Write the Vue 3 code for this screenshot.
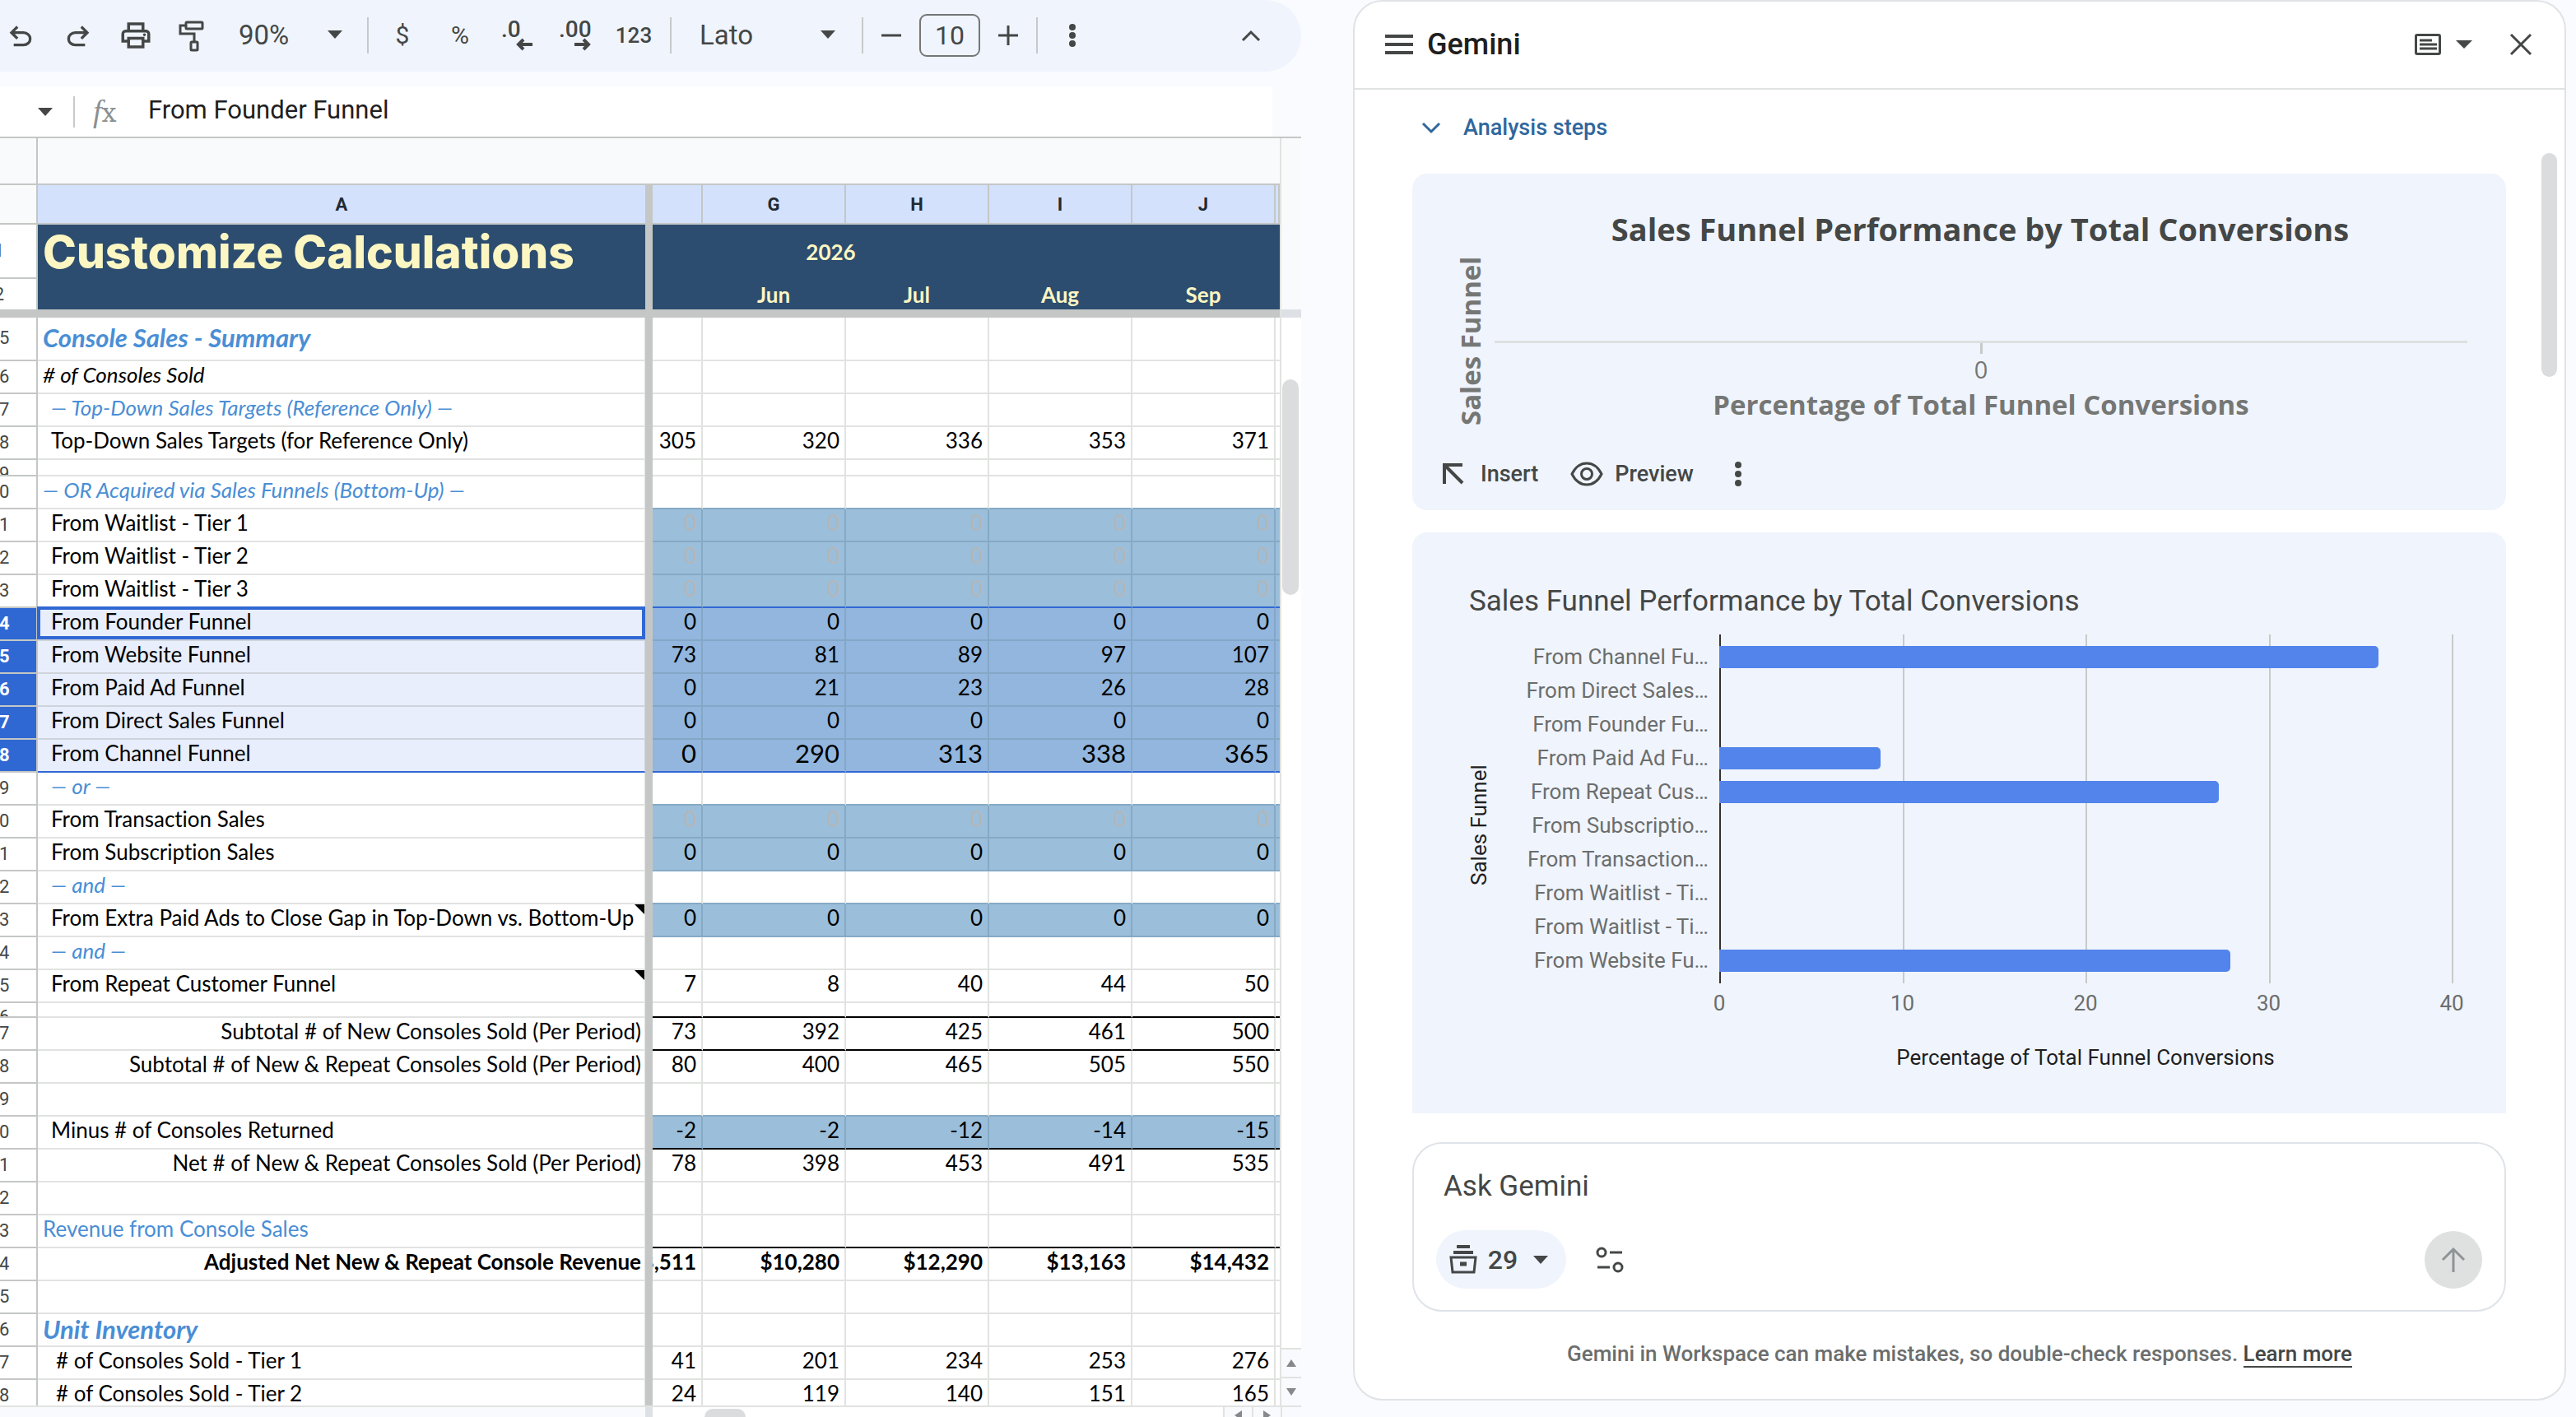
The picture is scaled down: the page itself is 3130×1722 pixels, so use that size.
<script setup>
import { ref } from 'vue'

const zoom = ref('90%')
const font = ref('Lato')
const fontSize = ref('10')
const formula = ref('From Founder Funnel')
const prompt = ref('')

const months = ['G', 'H', 'I', 'J']
const z = ['0', '0', '0', '0', '0']

const rows = [
  { n: 15, label: 'Console Sales - Summary', kind: 'section', size: 'tall' },
  { n: 16, label: '# of Consoles Sold', kind: 'italic' },
  { n: 17, label: '— Top-Down Sales Targets (Reference Only) —', kind: 'group indent' },
  { n: 18, label: 'Top-Down Sales Targets (for Reference Only)', kind: 'indent', v: ['305', '320', '336', '353', '371'] },
  { n: 19, size: 'thin' },
  { n: 20, label: '— OR Acquired via Sales Funnels (Bottom-Up) —', kind: 'group', edge: 'shade' },
  { n: 21, label: 'From Waitlist - Tier 1', kind: 'indent', v: z, fill: 'muted' },
  { n: 22, label: 'From Waitlist - Tier 2', kind: 'indent', v: z, fill: 'muted' },
  { n: 23, label: 'From Waitlist - Tier 3', kind: 'indent', v: z, fill: 'muted', edge: 'range' },
  { n: 24, label: 'From Founder Funnel', kind: 'indent active', v: z, fill: 'input', sel: true },
  { n: 25, label: 'From Website Funnel', kind: 'indent', v: ['73', '81', '89', '97', '107'], fill: 'input', sel: true },
  { n: 26, label: 'From Paid Ad Funnel', kind: 'indent', v: ['0', '21', '23', '26', '28'], fill: 'input', sel: true },
  { n: 27, label: 'From Direct Sales Funnel', kind: 'indent', v: z, fill: 'input', sel: true },
  { n: 28, label: 'From Channel Funnel', kind: 'indent', v: ['0', '290', '313', '338', '365'], fill: 'input', sel: true, edge: 'range', big: true },
  { n: 29, label: '— or —', kind: 'group indent', edge: 'shade' },
  { n: 30, label: 'From Transaction Sales', kind: 'indent', v: z, fill: 'muted' },
  { n: 31, label: 'From Subscription Sales', kind: 'indent', v: z, fill: 'input' },
  { n: 32, label: '— and —', kind: 'group indent', edge: 'shade' },
  { n: 33, label: 'From Extra Paid Ads to Close Gap in Top-Down vs. Bottom-Up', kind: 'indent', v: z, fill: 'input', note: true },
  { n: 34, label: '— and —', kind: 'group indent' },
  { n: 35, label: 'From Repeat Customer Funnel', kind: 'indent', v: ['7', '8', '40', '44', '50'], note: true },
  { n: 36, size: 'short', edge: 'total' },
  { n: 37, label: 'Subtotal # of New Consoles Sold (Per Period)', kind: 'right', v: ['73', '392', '425', '461', '500'], edge: 'total' },
  { n: 38, label: 'Subtotal # of New & Repeat Consoles Sold (Per Period)', kind: 'right', v: ['80', '400', '465', '505', '550'] },
  { n: 39, edge: 'shade' },
  { n: 40, label: 'Minus # of Consoles Returned', kind: 'indent', v: ['-2', '-2', '-12', '-14', '-15'], fill: 'input', edge: 'total' },
  { n: 41, label: 'Net # of New & Repeat Consoles Sold (Per Period)', kind: 'right', v: ['78', '398', '453', '491', '535'] },
  { n: 42 },
  { n: 43, label: 'Revenue from Console Sales', kind: 'blue', edge: 'total' },
  { n: 44, label: 'Adjusted Net New & Repeat Console Revenue', kind: 'right strong', v: ['$8,511', '$10,280', '$12,290', '$13,163', '$14,432'], strong: true },
  { n: 45 },
  { n: 46, label: 'Unit Inventory', kind: 'section' },
  { n: 47, label: '# of Consoles Sold - Tier 1', kind: 'indent2', v: ['41', '201', '234', '253', '276'] },
  { n: 48, label: '# of Consoles Sold - Tier 2', kind: 'indent2', v: ['24', '119', '140', '151', '165'] },
]

const bars = [
  { label: 'From Channel Fu…', value: 36 },
  { label: 'From Direct Sales…', value: 0 },
  { label: 'From Founder Fu…', value: 0 },
  { label: 'From Paid Ad Fu…', value: 8.8 },
  { label: 'From Repeat Cus…', value: 27.3 },
  { label: 'From Subscriptio…', value: 0 },
  { label: 'From Transaction…', value: 0 },
  { label: 'From Waitlist - Ti…', value: 0 },
  { label: 'From Waitlist - Ti…', value: 0 },
  { label: 'From Website Fu…', value: 27.9 },
]
const ticks = [0, 10, 20, 30, 40]

const pct = (v) => `${(v / 40) * 100}%`
</script>

<template>
  <div class="app">
    <main class="workbook">
      <div class="toolbar" role="toolbar" aria-label="Main">
        <button class="tool" aria-label="Undo">
          <svg width="40" height="40" viewBox="0 -1 24 24"><path d="M7 19v-2h7.1q1.575 0 2.737-1T18 13.5T16.838 11T14.1 10H7.8l2.6 2.6L9 14L4 9l5-5l1.4 1.4L7.8 8h6.3q2.425 0 4.163 1.575T20 13.5t-1.737 3.925T14.1 19z" /></svg>
        </button>
        <button class="tool" aria-label="Redo">
          <svg width="40" height="40" viewBox="0 -1 24 24"><path d="M9.9 19q-2.425 0-4.163-1.575T4 13.5t1.737-3.925T9.9 8h6.3l-2.6-2.6L15 4l5 5l-5 5l-1.4-1.4l2.6-2.6H9.9q-1.575 0-2.738 1T6 13.5T7.162 16T9.9 17H17v2z" /></svg>
        </button>
        <button class="tool" aria-label="Print">
          <svg width="42" height="42" viewBox="0 0 24 24"><path d="M16 8V5H8v3H6V3h12v5zM18 12.5q.425 0 .713-.288T19 11.5t-.288-.712T18 10.5t-.712.288T17 11.5t.288.713t.712.287M16 19v-4H8v4zm2 2H6v-4H2v-6q0-1.275.875-2.137T5 8h14q1.275 0 2.138.863T22 11v6h-4zm2-6v-4q0-.425-.288-.712T19 10H5q-.425 0-.712.288T4 11v4h2v-2h12v2z" /></svg>
        </button>
        <button class="tool" aria-label="Paint format">
          <svg width="40" height="40" viewBox="0 0 40 40" class="line"><rect x="11" y="4" width="20" height="8" rx="1" /><path d="M11 8H4v10h17v9" /><rect x="17" y="28" width="8" height="10" rx="1" /></svg>
        </button>
        <span class="picker zoom">
          <select v-model="zoom" aria-label="Zoom"><option>90%</option></select>
          <svg class="caret" width="18" height="10" viewBox="0 0 18 10"><path d="M0 0h18l-9 10z" /></svg>
        </span>
        <i class="sep"></i>
        <button class="tool glyph" aria-label="Format as currency">$</button>
        <button class="tool glyph" aria-label="Format as percent">%</button>
        <button class="tool" aria-label="Decrease decimal places">
          <svg width="40" height="40" viewBox="0 0 40 40"><text x="0" y="22" class="dec">.0</text><path class="stroke" d="M38 31H22M27 25l-6 6l6 6" /></svg>
        </button>
        <button class="tool" aria-label="Increase decimal places">
          <svg width="40" height="40" viewBox="0 0 40 40"><text x="0" y="22" class="dec">.00</text><path class="stroke" d="M19 31h16M30 25l6 6l-6 6" /></svg>
        </button>
        <button class="tool digits" aria-label="More formats">123</button>
        <i class="sep after-digits"></i>
        <span class="picker font">
          <select v-model="font" aria-label="Font"><option>Lato</option></select>
          <svg class="caret" width="18" height="10" viewBox="0 0 18 10"><path d="M0 0h18l-9 10z" /></svg>
        </span>
        <i class="sep"></i>
        <button class="tool step" aria-label="Decrease font size">
          <svg width="24" height="24" viewBox="0 0 24 24" class="line"><path d="M0 12h24" /></svg>
        </button>
        <input v-model="fontSize" class="size" aria-label="Font size" />
        <button class="tool step" aria-label="Increase font size">
          <svg width="24" height="24" viewBox="0 0 24 24" class="line"><path d="M0 12h24M12 0v24" /></svg>
        </button>
        <i class="sep"></i>
        <button class="tool more" aria-label="More">
          <svg width="8" height="28" viewBox="0 0 8 28"><circle cx="4" cy="4" r="4" /><circle cx="4" cy="14" r="4" /><circle cx="4" cy="24" r="4" /></svg>
        </button>
        <button class="tool collapse" aria-label="Hide the menus">
          <svg width="24" height="16" viewBox="0 0 24 16" class="line"><path d="M2 14L12 4l10 10" /></svg>
        </button>
      </div>

      <div class="formula-bar">
        <button class="name-menu" aria-label="Name box menu">
          <svg width="18" height="10" viewBox="0 0 18 10"><path d="M0 0h18l-9 10z" /></svg>
        </button>
        <i class="sep"></i>
        <label class="fx" for="formula"><em>f</em>x</label>
        <input id="formula" v-model="formula" />
      </div>

      <div class="grid-area">
        <div class="sheet">
          <table>
            <colgroup>
              <col class="c-num" /><col class="c-a" /><col class="c-bar" /><col class="c-f" />
              <col v-for="m in months" :key="m" class="c-month" /><col />
            </colgroup>
            <thead>
              <tr class="outline-row">
                <td class="corner"></td><td></td><td class="bar"></td><td :colspan="6"></td>
              </tr>
              <tr class="letters">
                <td class="corner"></td>
                <th>A</th>
                <td class="bar"></td>
                <th></th>
                <th v-for="m in months" :key="m">{{ m }}</th>
                <th></th>
              </tr>
            </thead>
            <tbody>
              <tr class="banner year">
                <th class="num"><div>1</div></th>
                <td class="title">Customize Calculations</td>
                <td class="bar"></td>
                <td :colspan="4" class="year-cell">2026</td>
                <td :colspan="2"></td>
              </tr>
              <tr class="banner month">
                <th class="num"><div>2</div></th>
                <td></td>
                <td class="bar"></td>
                <td></td>
                <td>Jun</td><td>Jul</td><td>Aug</td><td>Sep</td><td></td>
              </tr>
              <tr class="frozen-edge"><td :colspan="9"></td></tr>
              <tr v-for="r in rows" :key="r.n" :class="[r.size, r.fill, r.edge && 'edge-' + r.edge, { sel: r.sel, big: r.big, strong: r.strong }]">
                <th class="num"><div>{{ r.n }}</div></th>
                <td class="label" :class="r.kind"><div>{{ r.label }}</div><i v-if="r.note" class="note"></i></td>
                <td class="bar"></td>
                <td v-for="i in 5" :key="i" class="val"><div>{{ r.v ? r.v[i - 1] : '' }}</div></td>
                <td class="val last"></td>
              </tr>
            </tbody>
          </table>
        </div>
        <div class="vscroll">
          <div class="vtrack"><i class="frozen-mark"></i><i class="vthumb"></i></div>
          <button aria-label="Scroll up"><svg width="12" height="9" viewBox="0 0 12 9"><path d="M6 0l6 9H0z" /></svg></button>
          <button aria-label="Scroll down"><svg width="12" height="9" viewBox="0 0 12 9"><path d="M0 0h12L6 9z" /></svg></button>
        </div>
      </div>
      <div class="hscroll">
        <i class="hfixed"></i><i class="hbar"></i>
        <div class="htrack"><i class="hthumb"></i></div>
        <button aria-label="Scroll left"><svg width="9" height="12" viewBox="0 0 9 12"><path d="M9 0v12L0 6z" /></svg></button>
        <button aria-label="Scroll right"><svg width="9" height="12" viewBox="0 0 9 12"><path d="M0 0v12l9-6z" /></svg></button>
        <i class="hend"></i>
      </div>
    </main>

    <aside class="gemini">
      <header>
        <button aria-label="Menu"><svg width="34" height="24" viewBox="0 0 34 24" class="line thick"><path d="M0 2h34M0 12h34M0 22h34" /></svg></button>
        <h2>Gemini</h2>
        <button class="layout" aria-label="Panel layout">
          <svg width="32" height="26" viewBox="0 0 32 26" class="line"><rect x="1.5" y="1.5" width="29" height="23" rx="1.5" /><path d="M6 8h15M6 13h21M6 18h21" /></svg>
          <svg width="20" height="10" viewBox="0 0 20 10"><path d="M0 0h20L10 10z" /></svg>
        </button>
        <button aria-label="Close"><svg width="26" height="26" viewBox="0 0 26 26" class="line"><path d="M1 1l24 24M25 1L1 25" /></svg></button>
      </header>

      <div class="thread">
        <button class="steps">
          <svg width="22" height="14" viewBox="0 0 22 14"><path d="M1 2l10 10L21 2" /></svg>
          Analysis steps
        </button>

        <section class="card preview">
          <h3>Sales Funnel Performance by Total Conversions</h3>
          <div class="empty-chart">
            <span class="y-title">Sales Funnel</span>
            <div class="empty-plot">
              <i class="axis"></i><i class="tick"></i>
              <span class="zero">0</span>
              <span class="x-title">Percentage of Total Funnel Conversions</span>
            </div>
          </div>
          <div class="actions">
            <button><svg width="26" height="26" viewBox="0 0 26 26" class="line thick"><path d="M2 25V2h22M3 3l21 21" /></svg>Insert</button>
            <button class="eye"><svg width="40" height="30" viewBox="0 0 40 30" class="line"><path d="M2 15C6 7 12 2 20 2s14 5 18 13c-4 8-10 13-18 13S6 23 2 15z" /><circle cx="20" cy="15" r="6.5" /></svg>Preview</button>
            <button class="dots" aria-label="More options"><svg width="8" height="30" viewBox="0 0 8 30"><circle cx="4" cy="4" r="4" /><circle cx="4" cy="15" r="4" /><circle cx="4" cy="26" r="4" /></svg></button>
          </div>
        </section>

        <section class="card chart">
          <h3>Sales Funnel Performance by Total Conversions</h3>
          <div class="chart-body">
            <span class="y-title">Sales Funnel</span>
            <ul class="names"><li v-for="(b, i) in bars" :key="i">{{ b.label }}</li></ul>
            <div class="plot-col">
              <div class="plot">
                <i v-for="t in ticks" :key="t" class="gridline" :class="{ base: t === 0 }" :style="{ left: pct(t) }"></i>
                <div v-for="(b, i) in bars" :key="i" class="bar-row"><i v-if="b.value" :style="{ width: pct(b.value) }"></i></div>
              </div>
              <div class="scale"><span v-for="t in ticks" :key="t">{{ t }}</span></div>
              <div class="x-title">Percentage of Total Funnel Conversions</div>
            </div>
          </div>
        </section>
        <i class="thumb"></i>
      </div>

      <form class="composer" @submit.prevent>
        <input v-model="prompt" class="ask" placeholder="Ask Gemini" aria-label="Ask Gemini" />
        <div class="composer-row">
          <button type="button" class="chip">
            <svg width="34" height="36" viewBox="0 0 34 36" class="line"><path d="M9 2h16" class="thick" /><path d="M5 9h24" class="thick" /><path d="M2 15h30l-2 18H4z" /><path d="M13 23h8" class="fat" /></svg>
            29
            <svg width="18" height="10" viewBox="0 0 18 10"><path d="M0 0h18l-9 10z" /></svg>
          </button>
          <button type="button" class="tune" aria-label="Sources">
            <svg width="34" height="32" viewBox="0 0 34 32" class="line"><circle cx="7" cy="7" r="5" /><path d="M17 7h15M2 25h15" /><circle cx="27" cy="25" r="5" /></svg>
          </button>
          <button class="send" aria-label="Send">
            <svg width="30" height="30" viewBox="0 0 30 30"><path d="M15 30V2M2 15L15 2l13 13" /></svg>
          </button>
        </div>
      </form>
      <p class="disclaimer">Gemini in Workspace can make mistakes, so double-check responses. <a href="#">Learn more</a></p>
    </aside>
  </div>
</template>

<style>
body { background: #f9fbfe; }
</style>

<style scoped>
.app {
  display: flex;
  gap: 63px;
  height: 100vh;
  padding-right: 12px;
  overflow: hidden;
  box-sizing: border-box;
  background: #f9fbfe;
  color: #444746;
  font-family: Roboto, "Noto Sans", sans-serif;
}
.app *, .app *::after { box-sizing: border-box; }
button, input, select {
  font: inherit;
  color: inherit;
  border: 0;
  padding: 0;
  margin: 0;
  background: none;
  outline: none;
}
button { display: flex; align-items: center; justify-content: center; flex: none; }
svg { fill: #444746; flex: none; display: block; overflow: visible; }
.line { fill: none; stroke: #444746; stroke-width: 3; }
.thick { stroke-width: 4; }
.fat { stroke-width: 5; }

/* workbook */
.workbook { flex: 1 1 1581px; min-width: 0; display: flex; flex-direction: column; }
.toolbar {
  flex: none;
  display: flex;
  align-items: center;
  height: 87px;
  padding: 0 36px 2px 0;
  background: #f0f4fc;
  border-radius: 0 44px 44px 0;
  overflow: hidden;
}
.tool { width: 70px; height: 70px; }
.tool:first-child { margin-left: -10px; }
.glyph { font-size: 30px; }
.digits { width: 72px; font-size: 26px; font-weight: 500; }
.dec { font-size: 28px; font-weight: 500; }
.stroke { fill: none; stroke: #444746; stroke-width: 4; }
.sep { flex: none; width: 2px; height: 44px; background: #c7c9cc; }
.picker { position: relative; display: flex; flex: none; }
.picker select { appearance: none; width: 100%; height: 60px; font-size: 33px; }
.caret { position: absolute; top: 24px; pointer-events: none; }
.zoom { width: 176px; }
.zoom select { padding-left: 20px; }
.zoom .caret { right: 30px; }
.zoom + .sep { margin-right: 6px; }
.after-digits { margin-left: 8px; }
.font { width: 231px; }
.font select { padding-left: 34px; }
.font .caret { right: 32px; }
.step { width: 68px; }
.size {
  width: 74px;
  height: 52px;
  border: 2px solid #747775;
  border-radius: 9px;
  text-align: center;
  font-size: 32px;
}
.more { width: 84px; }
.collapse { margin-left: auto; width: 50px; }

.formula-bar {
  flex: none;
  display: flex;
  align-items: center;
  height: 61px;
  margin: 18px 35px 0 0;
  background: #fff;
}
.name-menu { width: 89px; padding-left: 20px; }
.formula-bar .sep { height: 38px; }
.fx { width: 89px; padding-left: 22px; color: #8b9092; font: 32px/44px "DejaVu Serif", serif; }
.fx em { font-family: "Liberation Serif", serif; font-style: italic; font-size: 38px; }
.formula-bar input { flex: 1; min-width: 0; height: 56px; padding-bottom: 4px; color: #1f1f1f; font-size: 31px; }

.grid-area { flex: 1; min-height: 0; display: flex; border-top: 2px solid #c4c7c5; }
.sheet { flex: 1; min-width: 0; overflow: hidden; background: #fff; }
table { width: 100%; table-layout: fixed; border-collapse: separate; border-spacing: 0; }
td, th { padding: 0; }
.c-num { width: 46px; }
.c-a { width: 738px; }
.c-bar { width: 9px; }
.c-f { width: 61px; }
.c-month { width: 174px; }
tbody .bar, thead .bar { background: #c4c7c5; border: 0; }

.outline-row td { height: 57px; background: #f9fafc; border-bottom: 2px solid #c4c7c5; }
.letters td, .letters th { height: 48px; border-bottom: 2px solid #c4c7c5; }
.letters th { background: #d3e1fc; border-right: 2px solid #c4c7c5; color: #1f2a33; font: bold 22px Roboto, sans-serif; }
.letters .corner { background: #f9fafc; }
.corner { border-right: 2px solid #c4c7c5; }
.letters th:nth-child(2) { border-right: 0; }

.num {
  border-right: 2px solid #c4c7c5;
  border-bottom: 2px solid #c4c7c5;
  background: #fff;
  font: 22px Roboto, sans-serif;
  overflow: hidden;
}
/* the number strip is scrolled half out of view on the left */
.num div { width: 90px; margin-left: -46px; height: 38px; line-height: 38px; text-align: center; overflow: hidden; }

.banner td { background: #2c4d6f; color: #fcf6c2; font: bold 26px/32px Lato, sans-serif; text-align: center; }
.banner.year td { height: 66px; }
.banner.month td { height: 37px; padding-right: 2px; }
.banner .num { border-bottom: 2px solid #c4c7c5; }
.banner.month .num { border-bottom: 0; }
.banner.month .num div { height: 34px; line-height: 34px; }
.banner .bar { background: #c4c7c5; }
.banner .title { padding-left: 6px; text-align: left; font: 800 55px/60px Inter, sans-serif; white-space: nowrap; }
.banner .year-cell { padding-right: 150px; }
.frozen-edge td { height: 10px; background: #c4c7c5; }

.label, .val {
  border-bottom: 2px solid #e1e3e1;
  color: #000;
  font: 26px/32px Lato, sans-serif;
  font-variant-ligatures: none;
  vertical-align: bottom;
}
.val { border-right: 2px solid #e1e3e1; }
.label div, .val div { height: 38px; padding: 0 6px 6px; white-space: nowrap; }
.val div { display: flex; justify-content: flex-end; overflow: hidden; }
.last { border-right: 0; }
.label { position: relative; border-right: 1px solid #e1e3e1; }
.label.indent div { padding-left: 16px; }
.label.indent2 div { padding-left: 22px; }
.label.right { text-align: right; }
.label.right div { padding-right: 4px; }
.label.italic { font-style: italic; }
.label.group { font-style: italic; color: #4a8ed5; }
.label.blue { color: #4a8ed5; }
.label.section { font-size: 31px; font-weight: bold; font-style: italic; color: #4a8ed5; }
.label.section div { padding-top: 2px; }
.strong .label, .strong .val { font-weight: bold; }
.big .val { font-size: 31px; }

.tall .num div { height: 51px; line-height: 50px; }
.tall .label.section div { height: 51px; padding-top: 8px; }
.thin .num div { height: 18px; line-height: 34px; }
.thin .label div, .thin .val div { height: 18px; padding: 0; }
.short .num div { height: 16px; line-height: 34px; }
.short .label div, .short .val div { height: 16px; padding: 0; }

.muted .val, .input .val { background: #9bbfdb; border-color: #86aac5; }
.muted .val { color: #b3b6b8; }
.edge-shade .val { border-bottom-color: #86aac5; }
.edge-total .val { border-bottom-color: #000; }
.sel .num { background: #3068d3; color: #fff; font-weight: bold; }
.sel .label { background: #e8eefb; border-color: #cfd4dc; }
.sel .val { background: #92b6dd; border-color: #84a7c7; }
.edge-range .val, .edge-range .label { border-bottom-color: #3068d3; }
.active::after {
  content: "";
  position: absolute;
  inset: -2px -1px 0 -1px;
  border: 4px solid #3068d3;
}
.note {
  position: absolute;
  top: 0;
  right: 0;
  width: 12px;
  height: 12px;
  background: #000;
  clip-path: polygon(0 0, 100% 0, 100% 100%);
}

.vscroll { flex: none; width: 26px; display: flex; flex-direction: column; background: #fff; border-left: 2px solid #e1e3e1; }
.vtrack { flex: 1; display: flex; flex-direction: column; align-items: flex-start; padding-top: 208px; background: linear-gradient(#f9fafc 208px, #fff 208px); }
.frozen-mark { width: 100%; height: 10px; background: #dde1e6; }
.vthumb { width: 20px; height: 262px; margin: 75px 0 0 1px; border-radius: 10px; background: #dadcde; }
.vscroll button { height: 35px; background: #f9fafd; border-top: 2px solid #e1e3e1; }
.vscroll svg, .hscroll svg { fill: #85898c; }
.hscroll { flex: none; height: 14px; display: flex; border-top: 2px solid #e1e3e1; overflow: hidden; }
.hfixed { width: 784px; background: #f9fafd; }
.hbar { width: 9px; background: #dde1e6; }
.htrack { flex: 1; background: #fff; padding: 2px 0 0 63px; overflow: hidden; }
.hthumb { display: block; width: 50px; height: 20px; border-radius: 10px; background: #dadcde; }
.hscroll button { width: 35px; height: 30px; align-items: flex-start; padding-top: 4px; background: #f9fafd; border-left: 2px solid #e1e3e1; }
.hend { width: 25px; border-left: 2px solid #e1e3e1; background: #f9fafd; }

/* side panel */
.gemini {
  flex: 1 1 1474px;
  min-width: 0;
  display: flex;
  flex-direction: column;
  margin-bottom: 20px;
  border: 2px solid #e0e3e6;
  border-radius: 36px;
  background: #fff;
  overflow: hidden;
}
.gemini > header { flex: none; display: flex; align-items: center; height: 107px; padding: 0 40px 2px 37px; border-bottom: 2px solid #e0e3e1; }
h2 { flex: 1; margin: 0 0 0 17px; color: #1f1f1f; font-size: 36px; font-weight: 500; line-height: 44px; }
.layout { gap: 18px; margin-right: 46px; }

.thread { position: relative; flex: 1; min-height: 0; overflow: hidden; padding: 0 71px 0 70px; }
.steps { gap: 28px; height: 92px; padding-left: 12px; color: #2f679d; font-size: 27px; font-weight: 500; }
.steps svg { fill: none; stroke: #2f679d; stroke-width: 3; }
.card { margin-top: 27px; border-radius: 18px; background: #f0f4fc; }
.steps + .card { margin-top: 10px; }
.card h3 { margin: 0; }
.thumb { position: absolute; top: 77px; right: 9px; width: 19px; height: 272px; border-radius: 10px; background: #dadcde; }

.preview { height: 409px; padding: 39px 47px 0 56px; color: #757775; font-family: "Open Sans", sans-serif; }
.preview h3 { padding-left: 42px; line-height: 56px; text-align: center; color: #444746; font-size: 38px; font-weight: 700; }
.empty-chart { display: flex; height: 216px; gap: 14px; }
.y-title { writing-mode: vertical-rl; transform: rotate(180deg); text-align: center; }
.empty-chart .y-title { width: 30px; line-height: 30px; font-size: 33px; font-weight: 700; }
.empty-plot { flex: 1; display: flex; flex-direction: column; align-items: center; padding-top: 108px; }
.axis { width: 100%; height: 3px; background: #dee0e0; }
.tick { width: 3px; height: 13px; background: #c6c9c8; }
.zero { margin-top: 1px; font-size: 29px; line-height: 36px; }
.empty-plot .x-title { font-size: 33px; line-height: 44px; font-weight: 700; margin-top: 3px; }
.actions { display: flex; align-items: center; height: 90px; margin: 9px 0 0 -19px; color: #444746; font: 500 27px Roboto, sans-serif; }
.actions button { gap: 20px; }
.actions .eye { gap: 14px; margin-left: 39px; }
.actions .dots { margin-left: 50px; }

.chart { height: 760px; padding: 60px 66px 0 69px; }
.chart h3 { color: #444746; font-size: 35px; font-weight: 400; line-height: 48px; }
.chart-body { display: flex; margin-top: 16px; font-size: 26px; }
.chart .y-title { width: 28px; height: 464px; margin-left: -2px; line-height: 28px; color: #1f1f1f; }
.names { width: 265px; margin: 0; padding: 7px 0 0; list-style: none; text-align: right; color: #6b6e6d; }
.names li { line-height: 41px; white-space: nowrap; }
.plot-col { flex: 1; margin-left: 13px; }
.plot { position: relative; height: 424px; padding: 7px 0; }
.gridline { position: absolute; top: 0; bottom: 0; width: 2px; background: #c8cac9; }
.gridline.base { background: #333; }
.bar-row { position: relative; display: flex; align-items: center; height: 41px; }
.bar-row i { height: 27px; border-radius: 0 5px 5px 0; background: #5384eb; }
.scale { display: flex; justify-content: space-between; margin: 8px -30px 0; color: #6b6e6d; }
.scale span { width: 60px; text-align: center; line-height: 32px; }
.chart .x-title { margin-top: 34px; line-height: 32px; text-align: center; color: #1f1f1f; }

.composer { flex: none; margin: 35px 71px 0 70px; height: 206px; padding: 26px 27px; border: 2px solid #dfe3e8; border-radius: 36px; }
.ask { width: 100%; height: 50px; padding-left: 9px; font-size: 35px; }
.ask::placeholder { color: #444746; opacity: 1; }
.composer-row { display: flex; align-items: center; margin-top: 29px; }
.chip { gap: 13px; height: 71px; width: 158px; padding-right: 6px; border-radius: 36px; background: #f0f4fc; font-size: 32px; font-weight: 500; }
.chip svg:last-child { margin-left: 6px; }
.tune { margin-left: 36px; }
.send { width: 70px; height: 70px; margin-left: auto; border-radius: 50%; background: #dfe1e1; }
.send svg { fill: none; stroke: #8f9496; stroke-width: 3; }
.disclaimer { flex: none; margin: 35px 0 38px; text-align: center; color: #6b6e6d; font-size: 26px; font-weight: 500; line-height: 33px; }
.disclaimer a { color: #444746; text-decoration: none; border-bottom: 2px solid #444746; }
</style>
